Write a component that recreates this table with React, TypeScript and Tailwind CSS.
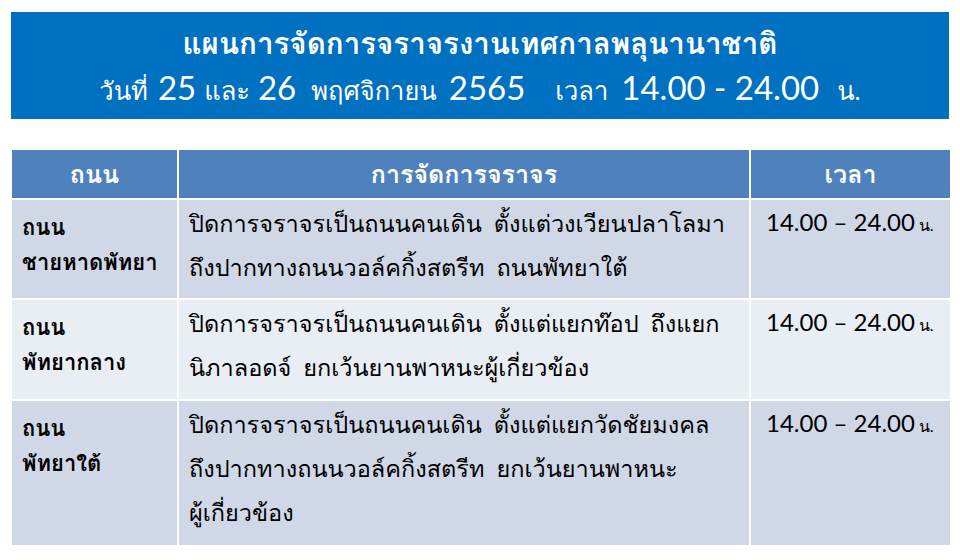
const thai = "font-['Lato','Loma',sans-serif]";

const rows = [
  {
    road: ['ถนน', 'ชายหาดพัทยา'],
    lines: ['ปิดการจราจรเป็นถนนคนเดิน  ตั้งแต่วงเวียนปลาโลมา', 'ถึงปากทางถนนวอล์คกิ้งสตรีท  ถนนพัทยาใต้'],
    bg: 'bg-[#d0d8e8]',
    h: 'h-[98px]',
  },
  {
    road: ['ถนน', 'พัทยากลาง'],
    lines: ['ปิดการจราจรเป็นถนนคนเดิน  ตั้งแต่แยกท๊อป  ถึงแยก', 'นิภาลอดจ์  ยกเว้นยานพาหนะผู้เกี่ยวข้อง'],
    bg: 'bg-[#e9edf4]',
    h: 'h-[99px]',
  },
  {
    road: ['ถนน', 'พัทยาใต้'],
    lines: ['ปิดการจราจรเป็นถนนคนเดิน  ตั้งแต่แยกวัดชัยมงคล', 'ถึงปากทางถนนวอล์คกิ้งสตรีท  ยกเว้นยานพาหนะ', 'ผู้เกี่ยวข้อง'],
    bg: 'bg-[#d0d8e8]',
    h: 'h-[144px]',
  },
];

export default function App() {
  return (
    <div className={`w-[960px] h-[560px] bg-white ${thai} text-black whitespace-pre`}>
      <div className="pt-[12px] px-[11px]">
        <div className="h-[107px] bg-[#0070c0] text-white flex flex-col items-center pt-[11px]">
          <div className="text-[29.5px] font-bold leading-[40px]">แผนการจัดการจราจรงานเทศกาลพลุนานาชาติ</div>
          <div className="flex items-baseline mt-[2px] leading-[44px]">
            <span className="text-[25.5px]">วันที่</span>
            <span className="text-[33px] ml-[10px]">25</span>
            <span className="text-[25.5px] ml-[8px]">และ</span>
            <span className="text-[33px] ml-[8px]">26</span>
            <span className="text-[25.5px] ml-[15px]">พฤศจิกายน</span>
            <span className="text-[33px] ml-[12px]">2565</span>
            <span className="text-[25.5px] ml-[30px]">เวลา</span>
            <span className="text-[33px] ml-[13px]">14.00 - 24.00</span>
            <span className="text-[25.5px] ml-[18px]">น.</span>
          </div>
        </div>
      </div>

      <div className="mt-[31px] mx-[12px] grid grid-cols-[165px_570px_199px] gap-x-[2px]">
        <div className="h-[48px] bg-[#4f81bd] text-white font-bold text-[25px] flex items-center justify-center">ถนน</div>
        <div className="h-[48px] bg-[#4f81bd] text-white font-bold text-[25px] flex items-center justify-center">การจัดการจราจร</div>
        <div className="h-[48px] bg-[#4f81bd] text-white font-bold text-[25px] flex items-center justify-center">เวลา</div>
        <div className="col-span-3 h-[2px]" />
        {rows.map((r, i) => (
          <Row key={i} {...r} last={i === rows.length - 1} />
        ))}
      </div>
    </div>
  );
}

function Row({ road, lines, bg, h, last }: { road: string[]; lines: string[]; bg: string; h: string; last: boolean }) {
  return (
    <>
      <div className={`${bg} ${h} pl-[10px] pt-[9px] font-bold text-[22px] leading-[35px]`}>
        {road.map((t) => (
          <div key={t}>{t}</div>
        ))}
      </div>
      <div className={`${bg} ${h} pl-[10px] pt-[1px] text-[23.5px] leading-[44px]`}>
        {lines.map((t) => (
          <div key={t}>{t}</div>
        ))}
      </div>
      <div className={`${bg} ${h} pl-[15px] pt-[1px] leading-[42px] flex items-baseline`}>
        <span className="text-[24px]">14.00 – 24.00</span>
        <span className="text-[16px] ml-[4px]">น.</span>
      </div>
      {!last && <div className="col-span-3 h-[2px]" />}
    </>
  );
}
